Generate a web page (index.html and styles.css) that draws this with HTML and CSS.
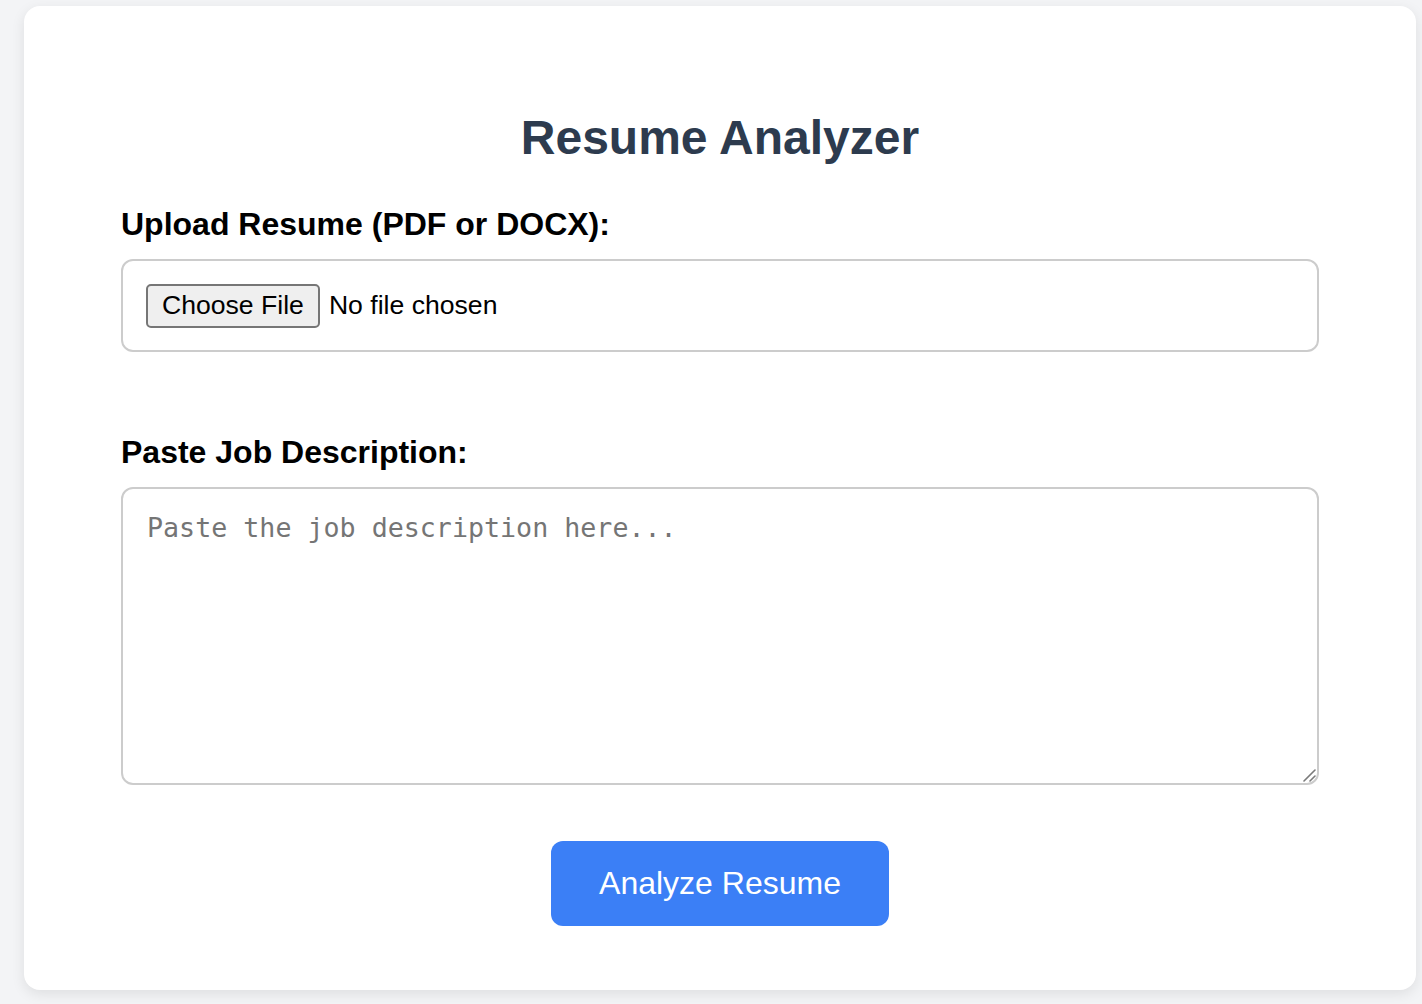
FILE: index.html
```html
<!DOCTYPE html>
<html lang="en">
<head>
<meta charset="utf-8">
<title>Resume Analyzer</title>
<link rel="stylesheet" href="styles.css">
</head>
<body>
<main class="card">
  <h1 class="title">Resume Analyzer</h1>
  <label class="label label-upload" for="resume">Upload Resume (PDF or DOCX):</label>
  <div class="file-box">
    <span class="file-btn">Choose File</span>
    <span class="file-name">No file chosen</span>
  </div>
  <label class="label label-job" for="job">Paste Job Description:</label>
  <div class="ta-wrap">
    <textarea id="job" class="job-text" placeholder="Paste the job description here..."></textarea>
    <svg class="grip" width="14" height="14" viewBox="0 0 14 14" aria-hidden="true">
      <line x1="13" y1="2" x2="2" y2="13" stroke="#7a7a7a" stroke-width="1.6" stroke-linecap="round"/>
      <line x1="13" y1="8" x2="8" y2="13" stroke="#7a7a7a" stroke-width="1.6" stroke-linecap="round"/>
    </svg>
  </div>
  <div class="actions">
    <button class="analyze" type="button">Analyze Resume</button>
  </div>
</main>
</body>
</html>
```

FILE: styles.css
```css
html, body {
  margin: 0;
  padding: 0;
}
body {
  background: #f3f4f6;
  font-family: "Liberation Sans", Arial, sans-serif;
  min-height: 1004px;
}
.card {
  margin: 6px 6px 0 24px;
  height: 984px;
  box-sizing: border-box;
  background: #ffffff;
  border-radius: 16px;
  box-shadow: 0 4px 14px rgba(0, 0, 0, 0.09);
  padding: 105px 97px 0 97px;
  display: flex;
  flex-direction: column;
}
.title {
  margin: 0 0 41px 0;
  text-align: center;
  font-size: 48px;
  font-weight: 700;
  color: #2d3b4e;
  line-height: 54px;
}
.label {
  display: block;
  font-size: 32px;
  font-weight: 700;
  color: #000;
  line-height: 36px;
  margin-bottom: 17px;
}
.label-job {
  margin-top: 82px;
}
.file-box {
  height: 93px;
  box-sizing: border-box;
  border: 2px solid #cccccc;
  border-radius: 12px;
  padding: 0 23px;
  display: flex;
  align-items: center;
  gap: 9px;
  font-size: 26.6px;
  color: #000;
}
.file-btn {
  height: 44px;
  box-sizing: border-box;
  border: 2px solid #767676;
  border-radius: 5px;
  background: #efefef;
  padding: 0 14px 2px 14px;
  line-height: 40px;
  display: inline-flex;
  align-items: center;
}
.file-name {
  line-height: 40px;
  padding-bottom: 2px;
}
.ta-wrap {
  position: relative;
  height: 298px;
}
.job-text {
  display: block;
  width: 100%;
  height: 298px;
  box-sizing: border-box;
  border: 2px solid #cccccc;
  border-radius: 12px;
  padding: 23px 24px 24px 24px;
  margin: 0;
  font-family: "DejaVu Sans Mono", monospace;
  font-size: 26.67px;
  line-height: 31px;
  color: #000;
  resize: none;
  outline: none;
}
.job-text::placeholder {
  color: #757575;
}
.grip {
  position: absolute;
  right: 3px;
  bottom: 3px;
}
.actions {
  display: flex;
  justify-content: center;
  margin-top: 56px;
}
.analyze {
  height: 85px;
  width: 338px;
  box-sizing: border-box;
  border: none;
  border-radius: 12px;
  background: #3b7ff6;
  color: #fff;
  font-family: "Liberation Sans", Arial, sans-serif;
  font-size: 32px;
  line-height: 37px;
  padding: 0 48px;
  cursor: pointer;
}
```
